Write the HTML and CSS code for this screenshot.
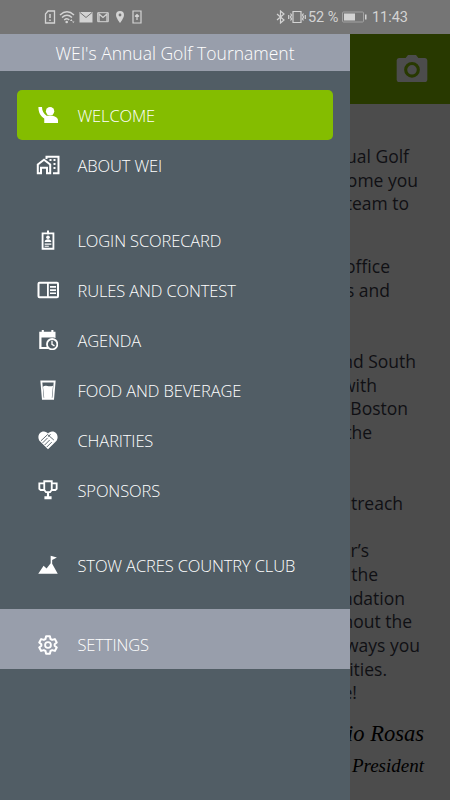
FILE: index.html
```html
<!DOCTYPE html>
<html lang="en">
<head>
    <meta charset="UTF-8">
    <meta name="viewport" content="width=device-width, initial-scale=1.0">
    <title>WEI's Annual Golf Tournament</title>
    <link rel="stylesheet" href="styles.css">
</head>
<body>
    <div class="statusbar">
        <div class="status-left">
            <svg width="12" height="14" viewBox="0 0 12 14"><path d="M4 1h6.500v12h-9V4z" fill="none" stroke="currentColor" stroke-width="1.300"/><path d="M6 4v4M6 9.500v1.500" stroke="currentColor" stroke-width="1.500"/></svg>
            <svg width="17" height="14" viewBox="0 0 17 14"><g fill="none" stroke="currentColor" stroke-width="1.500"><path d="M1 5q7-6.500 14 0M3 7.500q5-4.500 10 0M5.200 10q2.800-2.500 5 0"/></g><circle cx="7.700" cy="12" r="1.300" fill="currentColor"/><path d="M11 11l1.300-2 1.200 2zM13 11.500h2.500L14.300 13z" fill="currentColor"/></svg>
            <svg width="14" height="12" viewBox="0 0 14 12"><path fill="currentColor" d="M.5 1h13v10.500H.5z"/><path d="M1 1.500l6 5 6-5" fill="none" stroke="#757575"/></svg>
            <svg width="12" height="12" viewBox="0 0 12 12"><path d="M.7 1.700h10.600v9H.7z" fill="none" stroke="currentColor"/><path d="M2 10.500V3l4 3.500L10 3v7.500" fill="none" stroke="currentColor" stroke-width="1.300"/></svg>
            <svg width="10" height="14" viewBox="0 0 10 14"><path fill="currentColor" fill-rule="evenodd" d="M5 1a4 4 0 0 0-4 4c0 3 4 8 4 8s4-5 4-8a4 4 0 0 0-4-4zm0 2.600a1.400 1.400 0 1 1 0 2.800 1.400 1.400 0 0 1 0-2.800z"/></svg>
            <svg width="10" height="14" viewBox="0 0 10 14"><path d="M1 1h8v12H1zM5 10V5M3 6.500l2-2 2 2" fill="none" stroke="currentColor" stroke-width="1.200"/></svg>
        </div>
        <div class="status-right">
            <svg width="10" height="14" viewBox="0 0 10 14"><path d="M1 4l7 6-3.500 3V1L8 4l-7 6" fill="none" stroke="currentColor" stroke-width="1.200"/></svg>
            <svg width="18" height="14" viewBox="0 0 18 14"><path d="M5 1.500h8v11H5zM2.500 3.500l1 1.500-1 2 1 2-1 1.500M15.500 3.500l-1 1.500 1 2-1 2 1 1.500M.7 5v4M17.300 5v4" fill="none" stroke="currentColor" stroke-width="1.200"/></svg>
            <span class="percent">52 %</span>
            <svg class="battery" width="25" height="12" viewBox="0 0 25 12"><rect x=".5" y="1" width="21" height="10" rx="1" fill="none" stroke="#a2a2a2"/><path fill="currentColor" d="M2 2.500h11v7H2zM23 3.500h1.500v5H23z"/></svg>
            <span class="clock">11:43</span>
        </div>
    </div>

    <div class="screen">
        <div class="page">
            <div class="toolbar">
                <svg width="32" height="32" viewBox="0 0 24 24"><path fill="#4c4c4c" fill-rule="evenodd" d="M9 1.500L7.200 3.700H2.400C1.200 3.700.5 4.600.5 5.700v14.100c0 1.100.8 2 1.900 2h19.200c1.100 0 1.900-.9 1.900-2V5.700c0-1.100-.8-2-1.900-2h-4.800L15 1.500zM12 6.700a5.900 5.900 0 1 1 0 11.800 5.900 5.900 0 0 1 0-11.800zm0 2.300a3.600 3.600 0 1 0 0 7.200 3.600 3.600 0 0 0 0-7.200z"/></svg>
            </div>
            <div class="letter">
                <div class="para para-one">
                    <span>Annual Golf</span>
                    <span>welcome you</span>
                    <span>team to</span>
                </div>
                <div class="para para-two">
                    <span>office</span>
                    <span>s and</span>
                </div>
                <div class="para para-three">
                    <span>and South</span>
                    <span>with</span>
                    <span>Boston</span>
                    <span>the</span>
                </div>
                <div class="para para-four">
                    <span>Outreach</span>
                    <span></span>
                    <span>r’s</span>
                    <span>the</span>
                    <span>Foundation</span>
                    <span>throughout the</span>
                    <span>always you</span>
                    <span>Charities.</span>
                    <span>e!</span>
                </div>
                <div class="signature">io Rosas</div>
                <div class="role">President</div>
            </div>
        </div>

        <div class="drawer">
            <div class="drawer-title">WEI's Annual Golf Tournament</div>
            <div class="menu">
                <div class="item active">
                    <svg viewBox="0 0 24 24"><circle cx="14.500" cy="7.500" r="5"/><path d="M.5 2.500h4.300c0 4.500 2 8.200 5.500 10.300h7.200c4 .8 6.500 2.900 6.500 5.200v3.500H7.500v-5.300C3 13.500.5 9 .5 2.500z"/></svg>
                    <span>WELCOME</span>
                </div>
                <div class="item">
                    <svg class="wide" viewBox="0 0 24 20"><path fill="none" stroke="#fff" stroke-width="2" d="M10.500 4V1.800h12v16.400H17M1.800 9.500L8 4.800l6.200 4.700v8.700H11v-5.500H5v5.500H1.800z"/><path d="M13.500 4h2v2h-2zM17.500 4h2v2h-2zM17.500 8h2v2h-2zM17.500 12h2v2h-2z"/></svg>
                    <span>ABOUT WEI</span>
                </div>
                <div class="item spaced">
                    <svg viewBox="0 0 24 24"><path fill="none" stroke="#fff" stroke-width="2.200" d="M5.500 4h13v18.500h-13z"/><path d="M10.800.5h2.400v4.500h-2.400zM8 14.500c0-4.500 8-4.500 8 0zM8 16.300h8v1.300H8zM8 18.800h5V20H8z"/><circle cx="12" cy="8.700" r="2.200"/></svg>
                    <span>LOGIN SCORECARD</span>
                </div>
                <div class="item">
                    <svg class="wide" viewBox="0 0 24 20"><rect x="2.500" y="2.700" width="19.500" height="14.600" rx="1" fill="none" stroke="#fff" stroke-width="2"/><path d="M11 2h1.800v16H11zM14 6h6v1.700h-6zM14 9.200h6v1.700h-6zM14 12.400h6v1.700h-6z"/></svg>
                    <span>RULES AND CONTEST</span>
                </div>
                <div class="item">
                    <svg viewBox="0 0 24 24"><path d="M4.500 0H7v2.200h9V0h2.500v2.200H21v7.500A8 8 0 0 0 19 9H4.200v11.500h7l1.500 2.200H1.500V2.200h3z"/><circle cx="17" cy="17" r="6.200" fill="none" stroke="#fff" stroke-width="2.200"/><path fill="none" stroke="#fff" stroke-width="1.600" d="M16.800 13v4.200l3 1.800"/></svg>
                    <span>AGENDA</span>
                </div>
                <div class="item">
                    <svg viewBox="0 0 24 24"><path fill="none" stroke="#fff" stroke-width="2.200" d="M4 1.800h16l-1.800 20.700H5.800z"/><path d="M6 8c3-3 6 1 12-1l-1.500 15h-9z"/></svg>
                    <span>FOOD AND BEVERAGE</span>
                </div>
                <div class="item">
                    <svg viewBox="0 0 24 24"><path d="M12 23L2.300 13.500C-1.500 9 1 1.800 7 1.800c2.200 0 4 1.200 5 2.500 1-1.300 2.800-2.500 5-2.500 6 0 8.500 7.200 4.700 11.700z"/><path fill="none" stroke="#515d65" stroke-width="1.100" d="M3.500 13l8-7.500 7.500 6.500M5.500 15.500l6-6M8 18l6-6M10.500 20.500l6-6M12.500 8l2.500-3"/></svg>
                    <span>CHARITIES</span>
                </div>
                <div class="item">
                    <svg viewBox="0 0 24 24"><path fill="none" stroke="#fff" stroke-width="2.200" d="M7.500 1.500h9V12l-2 2.500h-5l-2-2.500zM7.500 4H1.600v6.500L3.200 12h4.300M16.500 4h5.900v6.500L20.800 12h-4.300"/><path d="M10.700 14.500h2.600v5h3V23H7.700v-3.500h3z"/></svg>
                    <span>SPONSORS</span>
                </div>
                <div class="item spaced">
                    <svg viewBox="0 0 24 24"><path d="M.3 22.500L6.700 13l3.600 3.300 4.900-6.500V1l7.500 2-5.700 2.900v4.500l6.700 12.100z"/></svg>
                    <span>STOW ACRES COUNTRY CLUB</span>
                </div>
            </div>
            <div class="settings">
                <svg viewBox="0 0 24 24"><path fill="none" stroke="#fff" stroke-width="2.400" stroke-linejoin="round" d="M9.700 1.500h4.600l.7 3.300 2 1.100 3.200-1 2.300 4-2.500 2.200v1.800l2.500 2.200-2.300 4-3.200-1-2 1.100-.7 3.300H9.700L9 19.200l-2-1.100-3.200 1-2.300-4L4 12.900v-1.800L1.500 8.900l2.300-4 3.200 1 2-1.100z"/><circle cx="12" cy="12" r="3.500" fill="none" stroke="#fff" stroke-width="2.200"/></svg>
                <span>SETTINGS</span>
            </div>
        </div>
    </div>
</body>
</html>
```
FILE: styles.css
```css
* {
    box-sizing: border-box;
}
body {
    margin: 0;
    width: 450px;
    height: 800px;
    overflow: hidden;
    font-family: "Open Sans", sans-serif;
    background: #4c4c4c;
}
svg {
    display: block;
    flex-shrink: 0;
}
.statusbar {
    display: flex;
    justify-content: space-between;
    height: 34px;
    padding: 0 42px 0 44px;
    background: #757575;
    color: #d3d3d3;
    font-family: Roboto, sans-serif;
    font-size: 14.5px;
}
.status-left,
.status-right {
    display: flex;
    align-items: center;
}
.status-left {
    gap: 5px;
}
.status-left svg:nth-child(2) {
    margin: 0 -2px;
}
.status-left svg:nth-child(4) {
    margin-left: -1px;
}
.status-left svg:nth-child(5) {
    margin: 0 2px 0 1px;
}
.status-right svg:first-child {
    margin-right: 2px;
}
.percent {
    margin-left: 2px;
    width: 34px;
    white-space: nowrap;
}
.clock {
    margin-left: 5px;
}
.screen {
    position: relative;
    height: 766px;
}
.toolbar {
    display: flex;
    align-items: center;
    justify-content: flex-end;
    height: 70px;
    padding-right: 22px;
    background: #283900;
}
.letter {
    padding-top: 41px;
    color: #101014;
    font-size: 17.5px;
    line-height: 23.7px;
    text-align: right;
}
.para {
    margin-bottom: 39px;
}
.para span {
    display: block;
    height: 23.7px;
    white-space: nowrap;
}
.para-two,
.para-three {
    margin-bottom: 47.4px;
}
.para-four {
    margin-bottom: 11px;
}
.para-one span {
    padding-right: 41px;
}
.para-one span:nth-child(2) {
    padding-right: 32px;
}
.para-two span {
    padding-right: 60px;
}
.para-three span:nth-child(1) {
    padding-right: 34px;
}
.para-three span:nth-child(2) {
    padding-right: 73px;
}
.para-three span:nth-child(3) {
    padding-right: 42px;
}
.para-three span:nth-child(4) {
    padding-right: 78px;
}
.para-four span:nth-child(1) {
    padding-right: 47px;
}
.para-four span:nth-child(3) {
    padding-right: 81px;
}
.para-four span:nth-child(4) {
    padding-right: 72px;
}
.para-four span:nth-child(5) {
    padding-right: 45px;
}
.para-four span:nth-child(6) {
    padding-right: 38px;
}
.para-four span:nth-child(7) {
    padding-right: 30px;
}
.para-four span:nth-child(8) {
    padding-right: 63px;
}
.para-four span:nth-child(9) {
    padding-right: 93px;
}
.signature,
.role {
    padding-right: 26px;
    color: #000;
    font-family: Satisfy, "Liberation Serif", cursive;
    font-style: italic;
    font-size: 22.5px;
    line-height: 36px;
}
.role {
    font-size: 19px;
    line-height: 28px;
}
.drawer {
    position: absolute;
    top: 0;
    left: 0;
    width: 350px;
    height: 766px;
    background: #515d65;
    color: #fff;
    font-weight: 300;
}
.drawer-title {
    height: 37px;
    background: #989eab;
    font-size: 17.5px;
    line-height: 38px;
    text-align: center;
}
.menu {
    padding: 19px 17px 0;
}
.item,
.settings {
    display: flex;
    align-items: center;
    height: 50px;
    padding-left: 20.5px;
    font-size: 16.5px;
    letter-spacing: -0.13px;
    white-space: nowrap;
}
.item svg,
.settings svg {
    width: 20px;
    height: 20px;
    margin-right: 20px;
    fill: #fff;
}
.item svg.wide {
    width: 24px;
    margin: 0 18px 0 -2px;
}
.active {
    border-radius: 5px;
    background: #84bd00;
}
.spaced {
    margin-top: 25px;
}
.settings {
    height: 60px;
    margin-top: 19px;
    padding: 11px 0 0 37.5px;
    background: #989eab;
}
```
